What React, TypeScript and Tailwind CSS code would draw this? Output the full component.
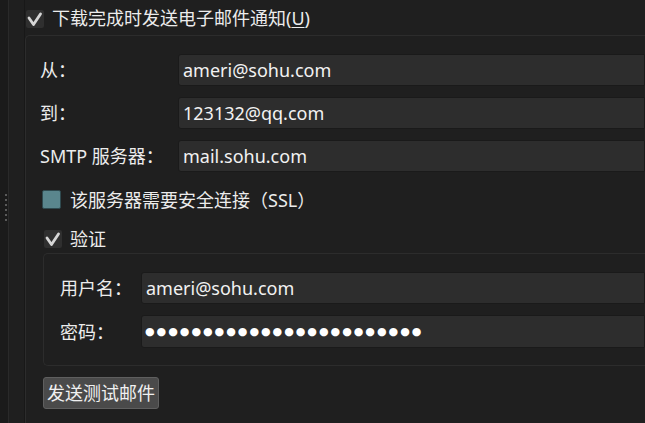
const font = "font-['Noto_Sans','Noto_Sans_CJK_SC',sans-serif]"

function Check({ className = "" }: { className?: string }) {
  return (
    <span className={"flex items-center justify-center shrink-0 w-[18px] h-[18px] bg-[#2f2f2f] rounded-[2px] " + className}>
      <svg width="18" height="18" viewBox="0 0 18 18">
        <polyline points="3,8 7.5,14.5 14.5,4" fill="none" stroke="#d6d6d6" strokeWidth="2.8" strokeLinecap="round" strokeLinejoin="round" />
      </svg>
    </span>
  )
}

function Field({ value }: { value: string }) {
  return (
    <div className="flex-1 min-w-0 h-[32px] flex items-center pl-[4px] bg-[#2d2d2d] border border-[#1a1a1a] rounded-l-[3px] text-[#f2f2f2] whitespace-nowrap">
      {value}
    </div>
  )
}

export default function App() {
  const rows = [
    { label: "从：", value: "ameri@sohu.com" },
    { label: "到：", value: "123132@qq.com" },
    { label: "SMTP 服务器：", value: "mail.sohu.com" },
  ]

  return (
    <div className={"w-[645px] h-[423px] overflow-hidden flex bg-[#1f1f1f] text-[18px] leading-none text-[#ececec] " + font}>
      {/* splitter */}
      <div className="w-[9px] shrink-0 bg-[#1b1b1b] border-r border-[#2a2a2a] flex flex-col gap-[3px] pt-[194px] pl-[5px]">
        {[0, 1, 2, 3, 4, 5].map((i) => (
          <span key={i} className="block w-[2px] h-[2px] bg-[#5a5a5a]" />
        ))}
      </div>
      <div className="w-[16px] shrink-0 border-r border-[#181818]" />

      <div className="flex-1 min-w-0 flex flex-col">
        {/* header */}
        <div className="h-[35px] shrink-0 flex items-start pt-[10px] pl-[1px]">
          <Check />
          <span className="ml-[8px] mt-[-1px] whitespace-nowrap">
            下载完成时发送电子邮件通知(<span className="underline underline-offset-2">U</span>)
          </span>
        </div>

        {/* group */}
        <div className="flex-1 border-t border-l border-[#2c2c2c] rounded-tl-[5px] pt-[18px] pl-[14px] flex flex-col">
          <div className="flex flex-col gap-[11px]">
            {rows.map((r) => (
              <div key={r.label} className="flex items-center">
                <span className="w-[138px] shrink-0 whitespace-nowrap">{r.label}</span>
                <Field value={r.value} />
              </div>
            ))}
          </div>

          <div className="flex items-center mt-[18px] ml-[2px]">
            <span className="w-[19px] h-[19px] shrink-0 bg-[#5a868d] border border-[#2f4a4f] rounded-[2px]" />
            <span className="ml-[9px] whitespace-nowrap">该服务器需要安全连接（SSL）</span>
          </div>

          <div className="flex items-center mt-[21px] ml-[4px]">
            <Check />
            <span className="ml-[8px] whitespace-nowrap">验证</span>
          </div>

          {/* inner group */}
          <div className="mt-[5px] ml-[3px] border-t border-l border-b border-[#2c2c2c] rounded-l-[5px] pt-[18px] pb-[17px] pl-[16px] flex flex-col gap-[11px]">
            <div className="flex items-center">
              <span className="w-[81px] shrink-0 whitespace-nowrap">用户名：</span>
              <Field value="ameri@sohu.com" />
            </div>
            <div className="flex items-center">
              <span className="w-[81px] shrink-0 whitespace-nowrap">密码：</span>
              <div className="flex-1 min-w-0 h-[33px] flex items-center pl-[3px] bg-[#2d2d2d] border border-[#1a1a1a] rounded-l-[3px] text-white whitespace-nowrap font-['DejaVu_Sans',sans-serif] text-[11px] tracking-[2px]">
                {"●".repeat(24)}
              </div>
            </div>
          </div>

          <div className="mt-[11px] ml-[3px]">
            <button className="w-[116px] h-[32px] bg-[#4a4a4a] border border-[#5f5f5f] rounded-[3px] text-[#f0f0f0] text-[18px] leading-none">
              发送测试邮件
            </button>
          </div>
        </div>
      </div>
    </div>
  )
}
